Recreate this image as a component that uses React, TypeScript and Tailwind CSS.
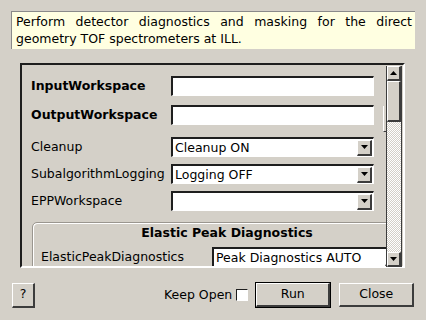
import React from "react";

const sunken =
  "border-t-2 border-l-2 border-b border-r border-t-[#1e1e1e] border-l-[#1e1e1e] border-b-white border-r-white";
const raised =
  "border-t border-l border-b-2 border-r-2 border-t-white border-l-white border-b-[#3c3c3c] border-r-[#3c3c3c]";

function Arrow({ up }: { up?: boolean }) {
  return (
    <svg width="7" height="4" viewBox="0 0 7 4">
      {up ? <polygon points="0,4 7,4 3.5,0" fill="#000" /> : <polygon points="0,0 7,0 3.5,4" fill="#000" />}
    </svg>
  );
}

function Select({ value, className = "" }: { value: string; className?: string }) {
  return (
    <div className={`h-[20px] bg-white flex items-center ${sunken} ${className}`}>
      <span className="flex-1 pl-[2px] leading-[16px] whitespace-nowrap">{value}</span>
      <div className={`w-[15px] h-[16px] mr-[1px] shrink-0 bg-[#d4d0c8] flex items-center justify-center ${raised}`}>
        <Arrow />
      </div>
    </div>
  );
}

function Input() {
  return <div className={`h-[20px] w-[203px] bg-white ${sunken}`} />;
}

export default function App() {
  return (
    <div
      className="w-[426px] h-[320px] bg-[#d4d0c8] text-[12.5px] text-black flex flex-col overflow-hidden"
      style={{ fontFamily: '"DejaVu Sans", sans-serif' }}
    >
      <div className="ml-[11px] mt-[11px] w-[404px] h-[38px] bg-[#ffffe1] border-t border-l border-[#8a8a8a] pl-[4px] pr-[3px] pt-[1px] leading-[17px] text-justify">
        Perform detector diagnostics and masking for the direct geometry TOF spectrometers at ILL.
      </div>

      <div
        className={`ml-[20px] mt-[14px] w-[385px] h-[205px] flex border-t-2 border-l-2 border-b-2 border-r-2 border-t-[#1e1e1e] border-l-[#1e1e1e] border-b-white border-r-white`}
      >
        <div className="relative w-[364px] h-full overflow-hidden flex flex-col">
          <div className="flex items-center mt-[11px] h-[20px]">
            <span className="w-[149px] pl-[9px] font-bold">InputWorkspace</span>
            <Input />
          </div>
          <div className="flex items-center mt-[9px] h-[20px]">
            <span className="w-[149px] pl-[9px] font-bold">OutputWorkspace</span>
            <Input />
          </div>
          <div className="flex items-center mt-[12px] h-[20px]">
            <span className="w-[149px] pl-[9px]">Cleanup</span>
            <Select value="Cleanup ON" className="w-[203px]" />
          </div>
          <div className="flex items-center mt-[7px] h-[20px]">
            <span className="w-[149px] pl-[9px]">SubalgorithmLogging</span>
            <Select value="Logging OFF" className="w-[203px]" />
          </div>
          <div className="flex items-center mt-[7px] h-[20px]">
            <span className="w-[149px] pl-[9px]">EPPWorkspace</span>
            <Select value="" className="w-[203px]" />
          </div>
          <div className="ml-[10px] mt-[11px] w-[392px] h-[80px] shrink-0 rounded-[5px] border border-[#9a968f] shadow-[inset_1px_1px_0_#fff] flex flex-col">
            <div className="text-center font-bold mt-[1px] pr-[2px] leading-[17px]">Elastic Peak Diagnostics</div>
            <div className="flex items-center mt-[6px] h-[20px]">
              <span className="w-[179px] pl-[8px]">ElasticPeakDiagnostics</span>
              <Select value="Peak Diagnostics AUTO" className="w-[190px] shrink-0" />
            </div>
          </div>
          <div className="absolute left-[361px] top-[41px] w-[6px] h-[26px] border-l border-b border-l-white border-b-[#3c3c3c]" />
        </div>

        <div className="w-[16px] h-full flex flex-col border-l border-r border-[#3c3c3c] mt-[1px] mb-[1px]">
          <div className={`h-[15px] shrink-0 bg-[#d4d0c8] flex items-center justify-center ${raised}`}>
            <Arrow up />
          </div>
          <div className={`h-[41px] shrink-0 bg-[#d4d0c8] ${raised}`} />
          <div className="flex-1 bg-[conic-gradient(#ffffff_25%,#d4d0c8_0_50%,#ffffff_0_75%,#d4d0c8_0)] bg-[length:2px_2px]" />
          <div className={`h-[15px] shrink-0 bg-[#d4d0c8] flex items-center justify-center ${raised}`}>
            <Arrow />
          </div>
        </div>
      </div>

      <div className="flex items-center mt-[14px] h-[26px]">
        <div className={`ml-[12px] w-[23px] h-[25px] flex items-center justify-center ${raised}`}>?</div>
        <span className="ml-[129px]">Keep Open</span>
        <div className={`ml-[4px] w-[12px] h-[12px] bg-white border-t border-l border-b border-r border-t-[#1e1e1e] border-l-[#1e1e1e] border-b-white border-r-white`} />
        <div className="ml-[7px] w-[76px] h-[26px] border border-black">
          <div className={`w-full h-full flex items-center justify-center ${raised}`}>Run</div>
        </div>
        <div className={`ml-[8px] w-[75px] h-[24px] flex items-center justify-center ${raised}`}>Close</div>
      </div>
    </div>
  );
}
